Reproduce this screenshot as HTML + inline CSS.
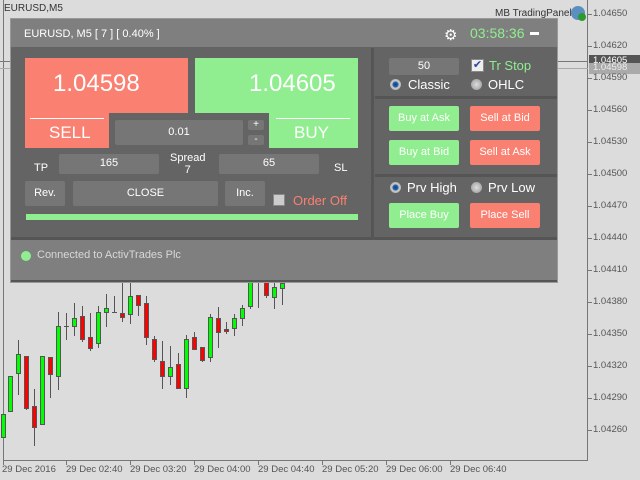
<!DOCTYPE html>
<html><head><meta charset="utf-8"><style>
*{margin:0;padding:0;box-sizing:border-box}
body{width:640px;height:480px;background:#dcdcdc;position:relative;overflow:hidden;font-family:"Liberation Sans","DejaVu Sans",sans-serif}
.a{position:absolute}
.t{position:absolute;white-space:nowrap}
.fld{position:absolute;background:#767676;color:#fff;font-size:11px;text-align:center;border-radius:2px}
.btn{position:absolute;color:#fff;font-size:11px;text-align:center;border-radius:2px}
.g{background:#90ee90}.r{background:#fa8072}
.ax{position:absolute;font-size:9.5px;color:#555;font-family:"Liberation Sans",sans-serif;white-space:nowrap}
.radio{position:absolute;width:11px;height:11px;border-radius:50%;background:radial-gradient(circle,#ddd 0,#aaa 70%,#888 100%)}
.radio.on{background:radial-gradient(circle,#0a3c78 0,#2a6db0 35%,#ccc 45%,#999 100%)}
</style></head><body>
<svg class="a" style="left:0;top:0" width="640" height="480">
<line x1="3.5" y1="0" x2="3.5" y2="460" stroke="#777"/>
<line x1="587.5" y1="0" x2="587.5" y2="461" stroke="#777"/>
<line x1="3" y1="460.5" x2="588" y2="460.5" stroke="#777"/>
<g stroke="#777"><line x1="588" y1="14.5" x2="592" y2="14.5"/><line x1="588" y1="46.5" x2="592" y2="46.5"/><line x1="588" y1="78.5" x2="592" y2="78.5"/><line x1="588" y1="110.5" x2="592" y2="110.5"/><line x1="588" y1="142.5" x2="592" y2="142.5"/><line x1="588" y1="174.5" x2="592" y2="174.5"/><line x1="588" y1="206.5" x2="592" y2="206.5"/><line x1="588" y1="238.5" x2="592" y2="238.5"/><line x1="588" y1="270.5" x2="592" y2="270.5"/><line x1="588" y1="302.5" x2="592" y2="302.5"/><line x1="588" y1="334.5" x2="592" y2="334.5"/><line x1="588" y1="366.5" x2="592" y2="366.5"/><line x1="588" y1="398.5" x2="592" y2="398.5"/><line x1="588" y1="430.5" x2="592" y2="430.5"/>
<line x1="3.5" y1="460" x2="3.5" y2="465"/><line x1="66.5" y1="460" x2="66.5" y2="465"/><line x1="130.5" y1="460" x2="130.5" y2="465"/><line x1="194.5" y1="460" x2="194.5" y2="465"/><line x1="258.5" y1="460" x2="258.5" y2="465"/><line x1="322.5" y1="460" x2="322.5" y2="465"/><line x1="386.5" y1="460" x2="386.5" y2="465"/><line x1="450.5" y1="460" x2="450.5" y2="465"/>
<line x1="0" y1="61.5" x2="588" y2="61.5" stroke="#777"/><line x1="0" y1="68.5" x2="588" y2="68.5" stroke="#aaa"/>
</g>
<g stroke="#555" stroke-width="1">
<path d="M10.5 376V411M18.5 340V395M26.5 360V410M34.5 389V446M42.5 356V424M50.5 357V398M58.5 312V390M66.5 313V340M74.5 303V336M82.5 306V342M90.5 313V351M98.5 306V348M106.5 294V327M114.5 296V313M122.5 280V322M130.5 280V324M138.5 295V316M146.5 296V345M154.5 336V362M162.5 341V389M170.5 346V385M178.5 353V388M186.5 335V398M194.5 332V350M202.5 347V362M210.5 314V362M218.5 307V348M226.5 322V334M234.5 314V336M242.5 305V326M250.5 282V309M258.5 282V308M266.5 282V298M274.5 282V309M282.5 282V305"/>
</g>
<g stroke="#555" stroke-width="1">
<rect x="1.5" y="414.5" width="4" height="23" fill="#0f0"/>
<rect x="8.5" y="376.5" width="4" height="35" fill="#0f0"/>
<rect x="16.5" y="354.5" width="4" height="19" fill="#0f0"/>
<rect x="24.5" y="356.5" width="4" height="52" fill="#f00"/>
<rect x="32.5" y="406.5" width="4" height="21" fill="#f00"/>
<rect x="40.5" y="356.5" width="4" height="68" fill="#0f0"/>
<rect x="48.5" y="357.5" width="4" height="17" fill="#f00"/>
<rect x="56.5" y="326.5" width="4" height="50" fill="#0f0"/>
<line x1="64" y1="326.5" x2="69" y2="326.5"/>
<rect x="72.5" y="318.5" width="4" height="8" fill="#0f0"/>
<rect x="80.5" y="316.5" width="4" height="23" fill="#f00"/>
<rect x="88.5" y="337.5" width="4" height="11" fill="#f00"/>
<rect x="96.5" y="312.5" width="4" height="31" fill="#0f0"/>
<rect x="104.5" y="308.5" width="4" height="4" fill="#0f0"/>
<line x1="112" y1="312.5" x2="117" y2="312.5"/>
<rect x="120.5" y="313.5" width="4" height="4" fill="#f00"/>
<rect x="128.5" y="296.5" width="4" height="18" fill="#0f0"/>
<rect x="136.5" y="295.5" width="4" height="10" fill="#f00"/>
<rect x="144.5" y="303.5" width="4" height="34" fill="#f00"/>
<rect x="152.5" y="339.5" width="4" height="20" fill="#f00"/>
<rect x="160.5" y="361.5" width="4" height="15" fill="#f00"/>
<rect x="168.5" y="367.5" width="4" height="9" fill="#0f0"/>
<rect x="176.5" y="364.5" width="4" height="24" fill="#f00"/>
<rect x="184.5" y="339.5" width="4" height="49" fill="#0f0"/>
<rect x="192.5" y="337.5" width="4" height="12" fill="#f00"/>
<rect x="200.5" y="347.5" width="4" height="13" fill="#f00"/>
<rect x="208.5" y="317.5" width="4" height="40" fill="#0f0"/>
<rect x="216.5" y="318.5" width="4" height="14" fill="#f00"/>
<rect x="224.5" y="329.5" width="4" height="2" fill="#f00"/>
<rect x="232.5" y="318.5" width="4" height="10" fill="#0f0"/>
<rect x="240.5" y="308.5" width="4" height="10" fill="#0f0"/>
<rect x="248.5" y="282.5" width="4" height="24" fill="#0f0"/>
<rect x="264.5" y="282.5" width="4" height="13" fill="#f00"/>
<rect x="272.5" y="287.5" width="4" height="10" fill="#0f0"/>
<rect x="280.5" y="283.5" width="4" height="5" fill="#0f0"/>
</g>
</svg>
<div class="t" style="left:4px;top:3px;font-size:10px;color:#333">EURUSD,M5</div>
<div class="t" style="left:495px;top:8px;font-size:10px;color:#333">MB TradingPanel</div>
<div class="a" style="left:571px;top:6px;width:14px;height:14px;border-radius:50%;background:#5a8fc0"></div>
<div class="a" style="left:578px;top:13px;width:8px;height:8px;border-radius:50%;background:#2c9a2c"></div>
<div class="ax" style="left:593px;top:8px">1.04650</div>
<div class="ax" style="left:593px;top:40px">1.04620</div>
<div class="a" style="left:589px;top:55px;width:51px;height:12px;background:#555"></div>
<div class="ax" style="left:593px;top:55px;color:#fff">1.04605</div>
<div class="a" style="left:589px;top:63px;width:51px;height:11px;background:#aaa"></div>
<div class="ax" style="left:593px;top:62px;color:#eee">1.04598</div>
<div class="ax" style="left:593px;top:72px">1.04590</div>
<div class="ax" style="left:593px;top:104px">1.04560</div>
<div class="ax" style="left:593px;top:136px">1.04530</div>
<div class="ax" style="left:593px;top:168px">1.04500</div>
<div class="ax" style="left:593px;top:200px">1.04470</div>
<div class="ax" style="left:593px;top:232px">1.04440</div>
<div class="ax" style="left:593px;top:264px">1.04410</div>
<div class="ax" style="left:593px;top:296px">1.04380</div>
<div class="ax" style="left:593px;top:328px">1.04350</div>
<div class="ax" style="left:593px;top:360px">1.04320</div>
<div class="ax" style="left:593px;top:392px">1.04290</div>
<div class="ax" style="left:593px;top:424px">1.04260</div>
<div class="ax" style="left:2px;top:464px">29 Dec 2016</div>
<div class="ax" style="left:66px;top:464px">29 Dec 02:40</div>
<div class="ax" style="left:130px;top:464px">29 Dec 03:20</div>
<div class="ax" style="left:194px;top:464px">29 Dec 04:00</div>
<div class="ax" style="left:258px;top:464px">29 Dec 04:40</div>
<div class="ax" style="left:322px;top:464px">29 Dec 05:20</div>
<div class="ax" style="left:386px;top:464px">29 Dec 06:00</div>
<div class="ax" style="left:450px;top:464px">29 Dec 06:40</div>

<!-- panel -->
<div class="a" style="left:10px;top:18px;width:548px;height:265px;background:#646464;border:1px solid #999"></div>
<div class="a" style="left:11px;top:19px;width:546px;height:28px;background:#7f7f7f"></div>
<div class="t" style="left:24px;top:28px;font-size:11px;color:#fff">EURUSD, M5 [ 7 ] [ 0.40% ]</div>
<div class="t" style="left:444px;top:26px;font-size:15px;color:#fff">⚙</div>
<div class="t" style="left:470px;top:25px;font-size:14px;color:#90ee90">03:58:36</div>
<div class="a" style="left:530px;top:32px;width:9px;height:3px;background:#fff"></div>
<div class="a" style="left:11px;top:48px;width:363px;height:191px;background:#646464;border-right:3px solid #555"></div>
<div class="a" style="left:375px;top:96px;width:182px;height:3px;background:#555"></div>
<div class="a" style="left:375px;top:174px;width:182px;height:3px;background:#555"></div>
<div class="a" style="left:11px;top:237px;width:546px;height:3px;background:#555"></div>
<div class="a" style="left:11px;top:240px;width:546px;height:42px;background:#7f7f7f;border-bottom:2px solid #555"></div>

<div class="a r" style="left:25px;top:58px;width:163px;height:90px"></div>
<div class="a g" style="left:195px;top:58px;width:163px;height:90px"></div>
<div class="a" style="left:109px;top:113px;width:160px;height:36px;background:#646464"></div>
<div class="t" style="left:53px;top:70px;font-size:24px;color:#fff">1.04598</div>
<div class="t" style="left:249px;top:70px;font-size:24px;color:#fff">1.04605</div>
<div class="a" style="left:30px;top:118px;width:74px;height:1px;background:#fff"></div>
<div class="a" style="left:276px;top:118px;width:74px;height:1px;background:#fff"></div>
<div class="t" style="left:49px;top:123px;font-size:17px;color:#fff">SELL</div>
<div class="t" style="left:294px;top:123px;font-size:17px;color:#fff">BUY</div>
<div class="fld" style="left:115px;top:120px;width:128px;height:25px;line-height:25px">0.01</div>
<div class="fld" style="left:248px;top:120px;width:16px;height:10px;line-height:10px;font-size:10px">+</div>
<div class="fld" style="left:248px;top:135px;width:16px;height:10px;line-height:9px;font-size:10px">-</div>
<div class="t" style="left:34px;top:162px;font-size:11px;color:#fff">TP</div>
<div class="fld" style="left:59px;top:154px;width:100px;height:20px;line-height:18px">165</div>
<div class="t" style="left:170px;top:152px;font-size:11px;color:#fff;text-align:center;line-height:12px">Spread<br>7</div>
<div class="fld" style="left:219px;top:154px;width:100px;height:20px;line-height:18px">65</div>
<div class="t" style="left:334px;top:162px;font-size:11px;color:#fff">SL</div>
<div class="fld" style="left:25px;top:181px;width:40px;height:25px;line-height:24px">Rev.</div>
<div class="fld" style="left:73px;top:181px;width:145px;height:25px;line-height:24px">CLOSE</div>
<div class="fld" style="left:225px;top:181px;width:40px;height:25px;line-height:24px">Inc.</div>
<div class="a" style="left:273px;top:194px;width:12px;height:12px;background:#ccc;border:1px solid #888"></div>
<div class="t" style="left:293px;top:193px;font-size:13px;color:#fa8072">Order Off</div>
<div class="a g" style="left:26px;top:214px;width:332px;height:6px"></div>

<div class="fld" style="left:389px;top:58px;width:70px;height:17px;line-height:17px">50</div>
<div class="a" style="left:471px;top:59px;width:13px;height:13px;background:#eee;border:1px solid #888;color:#2a4a9a;font-size:11px;line-height:11px;text-align:center">✔</div>
<div class="t" style="left:489px;top:58px;font-size:13px;color:#90ee90">Tr Stop</div>
<div class="radio on" style="left:390px;top:79px"></div>
<div class="t" style="left:408px;top:77px;font-size:13px;color:#fff">Classic</div>
<div class="radio" style="left:471px;top:79px"></div>
<div class="t" style="left:488px;top:77px;font-size:13px;color:#fff">OHLC</div>
<div class="btn g" style="left:389px;top:106px;width:70px;height:25px;line-height:24px">Buy at Ask</div>
<div class="btn r" style="left:470px;top:106px;width:70px;height:25px;line-height:24px">Sell at Bid</div>
<div class="btn g" style="left:389px;top:140px;width:70px;height:25px;line-height:24px">Buy at Bid</div>
<div class="btn r" style="left:470px;top:140px;width:70px;height:25px;line-height:24px">Sell at Ask</div>
<div class="radio on" style="left:390px;top:182px"></div>
<div class="t" style="left:407px;top:180px;font-size:13px;color:#fff">Prv High</div>
<div class="radio" style="left:471px;top:182px"></div>
<div class="t" style="left:488px;top:180px;font-size:13px;color:#fff">Prv Low</div>
<div class="btn g" style="left:389px;top:203px;width:70px;height:25px;line-height:24px">Place Buy</div>
<div class="btn r" style="left:470px;top:203px;width:70px;height:25px;line-height:24px">Place Sell</div>

<div class="a" style="left:21px;top:251px;width:10px;height:10px;border-radius:50%;background:#90ee90"></div>
<div class="t" style="left:37px;top:249px;font-size:11px;color:#d8d8d8">Connected to ActivTrades Plc</div>
</body></html>
